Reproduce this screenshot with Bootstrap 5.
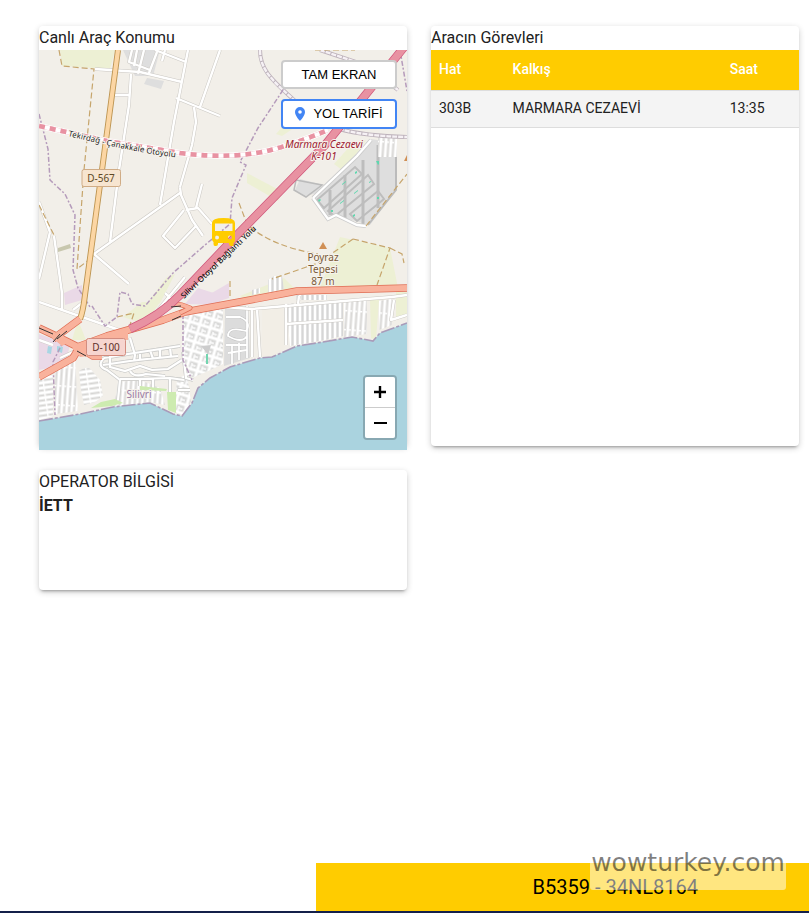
<!DOCTYPE html>
<html lang="tr">
<head>
<meta charset="utf-8">
<meta name="viewport" content="width=device-width, initial-scale=1">
<title>Canlı Araç Konumu</title>
<link href="https://cdn.jsdelivr.net/npm/bootstrap@5.3.0/dist/css/bootstrap.min.css" rel="stylesheet">
<style>
body{font-family:Roboto,"Noto Sans",sans-serif;color:#212121;background:#fff}
.page-main{padding:26px 10px 24px 39px}
.panel{border-radius:4px;box-shadow:0 3px 3px -2px rgba(0,0,0,.3),0 2px 6px rgba(0,0,0,.2);background:#fff}
.panel-tall{height:420px}
.panel-short{height:120px;margin-top:24px}
.panel-title{font-size:16px;line-height:24px;font-weight:400;margin:0}
.map-view{height:400px;background:#f2efe9}
.map-view>svg{display:block;width:100%;height:100%}
.map-actions{top:10px;right:10px;width:116px;gap:10px}
.map-btn{font-family:"Liberation Sans",Arial,sans-serif;font-size:13px;line-height:16px;height:29px;padding:0;background:#fff;border:2px solid #ccc;border-radius:4px;color:#000}
.map-btn-route{border-color:#4285f4;height:30px}
.zoom-box{right:10px;bottom:10px;border:2px solid rgba(0,0,0,.2);border-radius:4px;background-clip:padding-box;overflow:hidden}
.zoom-box button{width:30px;height:30px;background:#fff;border:0;padding:0 0 2px}
.zoom-box button:first-child{border-bottom:1px solid #ccc;height:31px}
.task-table{font-size:14px;line-height:20px;table-layout:fixed;color:#212121}
.task-table th{background:#fc0;color:#fff;font-weight:500;padding:9px 8px 11px;border-bottom:1px solid #ddd}
.task-table td{background:#f4f4f4;color:#212121;padding:7px 8px 9px;border-bottom:1px solid #ddd}
.c-line{width:20%}.c-stop{width:59%}.c-time{width:21%}
.vehicle-bar{width:61%;height:48px;background:#fc0;font-size:20px;color:#000;padding-left:106px}
.bottom-rule{height:2px;background:#14204a}
.site-stamp{right:23px;bottom:23px;width:196px;height:40px;border-radius:3px;background:rgba(255,255,255,.5);color:rgba(0,0,0,.5);font-family:"DejaVu Sans",Verdana,sans-serif;font-size:25px;line-height:26px;text-align:center;white-space:nowrap}
.map-text{font-family:"Noto Sans",sans-serif}
.lbl{font-family:"Noto Sans",sans-serif;paint-order:stroke;stroke:#f6f3ed;stroke-width:2px;stroke-linejoin:round}
</style>
<script src="https://cdn.jsdelivr.net/npm/bootstrap@5.3.0/dist/js/bootstrap.bundle.min.js"></script>
</head>
<body>
<div class="min-vh-100 d-flex flex-column position-relative">
<main class="page-main flex-grow-1">
<div class="row gx-4">
<div class="col-6">
<section class="panel panel-tall">
<h1 class="panel-title">Canlı Araç Konumu</h1>
<div class="map-view position-relative">
<svg viewBox="39 50 368 400" preserveAspectRatio="xMidYMid slice" role="img" aria-label="Silivri haritası">
<defs>
<pattern id="blkV" width="5" height="19" patternUnits="userSpaceOnUse" patternTransform="rotate(4)"><rect width="5" height="19" fill="#d9d8d6"/><path d="M0 0V19M5 0V19M0 0H3" stroke="#fff" stroke-width="2.8"/></pattern>
<pattern id="blkO" width="11" height="5" patternUnits="userSpaceOnUse" patternTransform="rotate(-8)"><rect width="11" height="5" fill="#d6d5d3"/><path d="M0 0H11M0 5H11M0 0V5" stroke="#fff" stroke-width="2.8"/></pattern>
<pattern id="blkS" width="11" height="9" patternUnits="userSpaceOnUse" patternTransform="rotate(17)"><rect width="11" height="9" fill="#d9d9d8"/><path d="M0 0H11M0 9H11M0 0V9M11 0V9" stroke="#fff" stroke-width="3"/><path d="M4 3V9M4 5H8" stroke="#fff" stroke-width="1.4"/></pattern>
<pattern id="blkE" width="5" height="22" patternUnits="userSpaceOnUse"><rect width="5" height="22" fill="#d6d6d6"/><path d="M0 0V22M5 0V22" stroke="#fff" stroke-width="2.6"/></pattern>
<path id="otoyol" d="M68 136C105 145 140 153 180 158"/>
<path id="baglanti" d="M184 299L258 228"/>
</defs>
<rect x="39" y="50" width="368" height="400" fill="#f2efe9"/>
<!-- fields and land use -->
<g fill="#edf0d4">
<path d="M60 50H115L110 69 62 66Z"/><path d="M247 173L283 192 278 201 247 183Z"/><path d="M276 134L290 118 297 126 282 136Z"/><path d="M334 164L351 145 366 140 352 160 342 170Z"/><path d="M340 237L390 248 398 288H320Z"/><path d="M142 310L167 277 175 274 160 303Z"/><path d="M240 296L284 278 298 292 250 302Z"/><path d="M370 300H379L376 340 371 338Z"/><path d="M78 320L86 340 72 340Z"/><path d="M123 317L142 302 160 302 145 324Z"/><path d="M396 292H407V314L396 317Z"/>
</g>
<g fill="#ead9e7"><path d="M64 293L82 285 82 300 65 305Z"/><path d="M210 294L229 283 229 298 210 304Z"/><path d="M185 304L198 288 220 295 220 305Z"/><path d="M39 334L70 345 65 365 39 370Z"/></g>
<path d="M58 248L70 244 71 248 58 252Z" fill="#c8c7ae"/>
<g fill="#dedede"><path d="M123 50H160L153 76 135 76Z"/><path d="M147 78L164 81 161 89 144 84Z"/><path d="M300 179L323 185 317 193 306 196 295 190Z"/><path d="M313 198L371 139 396 143 396 190 370 225 336 216 328 219Z"/></g>
<path d="M296 180L322 185 306 197 294 190Z" fill="none" stroke="#bbb" stroke-width="1.5"/>
<!-- facility blocks -->
<g fill="none" stroke="#bdbdbd" stroke-width="2"><path d="M317 200L355 167 362 174 324 208ZM328 211L368 175 374 184 335 216ZM350 214L378 191 384 199 357 221Z"/><path d="M345 175V218M363 160V224M378 145V208M330 190V215" stroke-width="3"/></g>
<path d="M313 198L357 156 371 140M313 198L328 219 336 215 357 225 366 226" stroke="#ccc" stroke-width="4" fill="none"/>
<path d="M313 198L357 156 371 140M313 198L328 219 336 215 357 225 366 226" stroke="#fff" stroke-width="2.4" fill="none"/>
<path d="M396 143V190L368 225" stroke="#bbb" stroke-width="2" fill="none"/>
<g fill="#5dd8ae"><path d="M318 200l2-1 1 1-2 2zM342 184l4-3v1l-4 3zM355 172l2-1v2l-2 1zM369 182l2-1v1l-2 1zM354 193l4-3v1l-4 3zM340 203l4-3v1l-4 3zM353 215l2-1v2l-2 1zM376 161h3v3l-1 1zM377 197h2v2h-2zM331 210h2v2h-2z"/></g>
<rect x="378" y="136" width="19" height="21" fill="url(#blkV)"/>
<!-- town blocks -->
<path d="M39 378L53 371V416L39 420Z" fill="url(#blkO)"/>
<path d="M55 366L75 357 78 411 55 414Z" fill="url(#blkV)"/>
<path d="M79 371Q88 364 93 372L100 380 103 396 95 402 84 405 81 390Z" fill="url(#blkO)"/>
<path d="M118 382L140 380 160 388 165 405 150 402 113 406 116 395Z" fill="url(#blkV)"/>
<path d="M177 378L187 375 191 402 182 415 175 412Z" fill="url(#blkS)"/>
<path id="curl" fill="none" stroke="#cfcfcd" stroke-width="3.4" d="M104 358Q96 366 107 370L120 380 118 400M104 358L128 354 180 346M103 365L130 361 147 359 178 356M110 353V367L125 371 140 366 152 370 168 369 182 360M130 338L135 355 134 361M120 379H136L170 378 184 380M130 371Q134 378 146 374L165 376M140 352V360M150 350L153 359M160 349V357M170 347L171 357M140 380V386M153 379V388M183 352L186 378 193 380M186 375L205 368M170 378V410M178 390H190"/>
<use href="#curl"/>
<path fill="none" stroke="#fff" stroke-width="2.2" d="M104 358Q96 366 107 370L120 380 118 400M104 358L128 354 180 346M103 365L130 361 147 359 178 356M110 353V367L125 371 140 366 152 370 168 369 182 360M130 338L135 355 134 361M120 379H136L170 378 184 380M130 371Q134 378 146 374L165 376M140 352V360M150 350L153 359M160 349V357M170 347L171 357M140 380V386M153 379V388M183 352L186 378 193 380M186 375L205 368M170 378V410M178 390H190"/>
<path d="M184 316L223 308 223 364 206 372 192 378 182 353Z" fill="url(#blkS)"/>
<path d="M225 309L248 306 250 358 224 366Z" fill="#dcdcdc"/>
<path d="M226 317H240Q252 322 246 331 228 326 228 336 242 344 247 336M232 345V364M239 343V360M226 345H247M228 353L247 350M247 306V358" fill="none" stroke="#c2c2c2" stroke-width="2.6"/>
<path d="M226 317H240Q252 322 246 331 228 326 228 336 242 344 247 336M232 345V364M239 343V360M226 345H247M228 353L247 350M247 306V358" fill="none" stroke="#fff" stroke-width="1.8"/>
<path d="M262 309L283 305 285 348 272 357 262 357Z" fill="#f2eee6"/>
<path d="M286 304L343 300V336L325 340 290 346Z" fill="url(#blkE)"/>
<path d="M344 300H367V334L344 337Z" fill="url(#blkV)"/>
<path d="M379 301L392 299V325L379 330Z" fill="url(#blkV)"/>
<path d="M268 280L274 276 282 276 284 289 268 293ZM252 290L260 288V293L252 295ZM296 295H327V300H296Z" fill="url(#blkE)"/>
<path d="M57 346l6 1-1 6-5-2zM48 346l4 1-1 7-4-1z" fill="#a8d6e3"/>
<path d="M140 386L167 389 166 391 140 390ZM167 392H176L176 413 168 410ZM91 408L101 402 115 399 123 403 112 406Z" fill="#cdebb0"/>
<path d="M201 346L211 345 208 355 206 352Z" fill="#ccc"/><path d="M206 354h2v10h-2z" fill="#73d5b0"/>
<!-- minor roads -->
<g fill="none" stroke-linejoin="round">
<path id="minor" d="M95 69L140 72 182 82M131 74L129 105 119 170 110 242M115 95H129M188 50L174 122 160 205M155 50L186 62M144 50L138 74M132 50L129 62 150 70M157 52L149 73M137 50L134 66M165 50L162 61M220 50L200 107M176 98L220 116M194 107L196 122 192 145 180 187M94 254L180 193M180 187L181 195 192 220 203 236M186 210L198 208 212 224M196 208L202 184M94 254L129 284M184 210L163 236 175 248 196 226M39 202L50 232M54 236L62 293 62 309M50 232L39 279M39 302L128 333M158 310L185 277M165 293L177 304M73 310L82 303M252 309L367 299 392 297 407 295M252 309V357M257 309L260 357M286 304V345M286 324L343 320M394 300L391 320 407 315M210 306L252 309M299 296L298 304M39 340L53 345M60 358L75 351" stroke="#cbc8c3" stroke-width="3.4"/>
<path d="M95 69L140 72 182 82M131 74L129 105 119 170 110 242M115 95H129M188 50L174 122 160 205M155 50L186 62M144 50L138 74M132 50L129 62 150 70M157 52L149 73M137 50L134 66M165 50L162 61M220 50L200 107M176 98L220 116M194 107L196 122 192 145 180 187M94 254L180 193M180 187L181 195 192 220 203 236M186 210L198 208 212 224M196 208L202 184M94 254L129 284M184 210L163 236 175 248 196 226M39 202L50 232M54 236L62 293 62 309M50 232L39 279M39 302L128 333M158 310L185 277M165 293L177 304M73 310L82 303M252 309L367 299 392 297 407 295M252 309V357M257 309L260 357M286 304V345M286 324L343 320M394 300L391 320 407 315M210 306L252 309M299 296L298 304M39 340L53 345M60 358L75 351" stroke="#fff" stroke-width="2.4"/>
</g>
<path d="M260 50C260 72 276 83 295 101M320 50L365 65 398 90M339 129Q365 136 407 137" fill="none" stroke="#bdb2bb" stroke-width="4"/>
<path d="M260 50C260 72 276 83 295 101M320 50L365 65 398 90M339 129Q365 136 407 137" fill="none" stroke="#f6f1f5" stroke-width="2.4" stroke-dasharray="5 1"/>
<!-- tracks and boundaries -->
<g fill="none" stroke="#c6a56c" stroke-width="1.2" stroke-dasharray="6 3"><path d="M59 50L62 66 94 69 84 170 77 269 94 256M39 205L55 237M239 203L247 224Q270 246 318 254M353 239L318 263 272 279M353 239L390 248 377 285M390 248L402 254 404 263M366 226L407 174M230 281V297M315 50H355M117 317L134 313 130 325"/></g>
<g fill="none" stroke="#b59bbb" stroke-width="1.5" stroke-dasharray="5 2 2 2"><path d="M39 114L48 149 50 180 65 194 75 215 73 270 78 288 90 307M283 90L258 128 240 162 246 165 232 198 230 224 205 245 173 273 145 306 132 304 128 294 120 292 117 317 105 326 92 306M39 327L62 344 53 362 55 415M183 314V360L192 380M400 50L407 91"/></g>
<!-- sea -->
<path d="M39 421L80 414 113 407 150 403 173 414 182 416 192 403 198 388 210 378 230 367 260 358 272 357 297 346 323 342 352 337 368 340 373 341 380 333 407 323V450H39Z" fill="#aad3df"/>
<path d="M39 421L80 414 113 407 150 403 173 414 182 416 192 403 198 388 210 378 230 367 260 358 272 357 297 346 323 342 352 337 368 340 373 341 380 333 407 323" fill="none" stroke="#a99bb9" stroke-width="1.6" stroke-dasharray="14 2 3 2"/>
<!-- main roads -->
<g fill="none" stroke-linejoin="round">
<path d="M118 50L102 170 85 295Q83 312 80 319" stroke="#bd9552" stroke-width="6"/><path d="M118 50L102 170 85 295Q83 312 80 319" stroke="#fcd6a4" stroke-width="4.2"/>
<path d="M39 377L73 358 80 346 107 336 163 320 185 312 250 300 297 291 407 288M39 328L56 336 78 347 93 356H102M53 339L80 319" stroke="#df6d54" stroke-width="7.6"/>
<path d="M39 377L73 358 80 346 107 336 163 320 185 312 250 300 297 291 407 288M39 328L56 336 78 347 93 356H102M53 339L80 319" stroke="#f9b29c" stroke-width="6.2"/>
<path d="M50 336L59 331 69 342 62 346ZM72 348L82 342 96 355 80 357ZM97 338L107 333 128 330 128 340 110 339Z" fill="#f9b29c"/>
<path d="M165 306Q175 301 190 308L180 313" stroke="#df6d54" stroke-width="5"/><path d="M165 306Q175 301 190 308L180 313" stroke="#f9b29c" stroke-width="3.6"/>
<path d="M405 46L325 145 237 235 180 295Q160 316 130 329" stroke="#d0557a" stroke-width="8.6"/><path d="M405 46L325 145 237 235 180 295Q160 316 130 329" stroke="#e892a2" stroke-width="7.2"/>
<path d="M39 126L107 141 180 153Q235 160 275 149 305 140 328 130" stroke="#fff" stroke-width="6"/><path d="M39 126L107 141 180 153Q235 160 275 149 305 140 328 130" stroke="#eec0ca" stroke-width="4.600"/><path d="M39 126L107 141 180 153Q235 160 275 149 305 140 328 130" stroke="#fff" stroke-width="4" /><path d="M39 126L107 141 180 153Q235 160 275 149 305 140 328 130" stroke="#e892a2" stroke-width="4.6" stroke-dasharray="6 5"/>
<path d="M39 328L53 334M57 339L67 331M77 351L86 356M53 342L60 334M171 307L181 306M172 320L181 316" stroke="#333" stroke-width="1"/>
</g>
<!-- labels -->
<text class="lbl" font-size="8" fill="#222"><textPath href="#otoyol">Tekirdağ - Çanakkale Otoyolu</textPath></text>
<text class="map-text" font-size="8" font-weight="500" fill="#111"><textPath href="#baglanti">Silivri Otoyol Bağlantı Yolu</textPath></text>
<rect x="82" y="169.500" width="38.500" height="17" rx="2" fill="#f7e5d0" stroke="#d0ac86"/><text class="map-text" x="101" y="182" text-anchor="middle" font-size="10" fill="#5e4824">D-567</text>
<rect x="86.500" y="338.500" width="39" height="17" rx="2" fill="#f6d5cf" stroke="#d38d80"/><text class="map-text" x="106" y="351" text-anchor="middle" font-size="10" fill="#60302a">D-100</text>
<text class="lbl" font-size="10" text-anchor="middle" fill="#9c1830" font-style="italic"><tspan x="324" y="148">Marmara Cezaevi</tspan><tspan x="324" y="160">K-101</tspan></text>
<text class="lbl" font-size="10" text-anchor="middle" fill="#795a38"><tspan x="323" y="261">Poyraz</tspan><tspan x="323" y="273">Tepesi</tspan><tspan x="323" y="285">87 m</tspan></text>
<text class="lbl" font-size="10" text-anchor="middle" x="139" y="398" fill="#9a7ba5">Silivri</text>
<path d="M323 242L327 249H319Z" fill="#d08f55"/><path d="M407 155v6h-3z" fill="#d08f55"/>
<!-- bus marker -->
<path fill-rule="evenodd" fill="#fc0" d="M212 223Q212 218 223.500 218T235 223V240Q235 242 233.500 243V244.500Q233.500 246 232 246H231Q229 246 229 244V243H218V244Q218 246 216 246H215Q213.500 246 213.500 244V242Q212 241 212 239ZM215 223.500V231H232.500V223.500ZM217 235.500a2 2 0 1 0 0 4a2 2 0 1 0 0-4M230 235.500a2 2 0 1 0 0 4a2 2 0 1 0 0-4"/>
</svg>
<div class="map-actions position-absolute d-flex flex-column">
<button class="map-btn" type="button">TAM EKRAN</button>
<button class="map-btn map-btn-route d-flex align-items-center justify-content-center gap-2" type="button"><svg width="10" height="14" viewBox="0 0 10 14" aria-hidden="true"><path fill="#4285f4" fill-rule="evenodd" d="M5 0a5 5 0 0 0-5 5c0 3.700 5 9 5 9s5-5.300 5-9a5 5 0 0 0-5-5zm0 3.200a1.800 1.800 0 1 1 0 3.600a1.800 1.800 0 0 1 0-3.600z"/></svg>YOL TARİFİ</button>
</div>
<div class="zoom-box position-absolute d-flex flex-column">
<button type="button" aria-label="Yakınlaştır"><svg width="14" height="14" viewBox="0 0 14 14"><path d="M7 1V13M1 7H13" stroke="#000" stroke-width="2.400"/></svg></button>
<button type="button" aria-label="Uzaklaştır"><svg width="14" height="14" viewBox="0 0 14 14"><path d="M1 7H14" stroke="#000" stroke-width="2"/></svg></button>
</div>
</div>
</section>
<section class="panel panel-short">
<h2 class="panel-title">OPERATOR BİLGİSİ</h2>
<strong class="panel-title fw-bold d-block">İETT</strong>
</section>
</div>
<div class="col-6">
<section class="panel panel-tall">
<h2 class="panel-title">Aracın Görevleri</h2>
<table class="task-table w-100">
<thead><tr><th class="c-line" scope="col">Hat</th><th class="c-stop" scope="col">Kalkış</th><th class="c-time" scope="col">Saat</th></tr></thead>
<tbody><tr><td>303B</td><td>MARMARA CEZAEVİ</td><td>13:35</td></tr></tbody>
</table>
</section>
</div>
</div>
</main>
<footer>
<div class="vehicle-bar ms-auto d-flex align-items-center justify-content-center">B5359 - 34NL8164</div>
<div class="bottom-rule"></div>
</footer>
<div class="site-stamp position-absolute">wowturkey.com</div>
</div>
</body>
</html>
